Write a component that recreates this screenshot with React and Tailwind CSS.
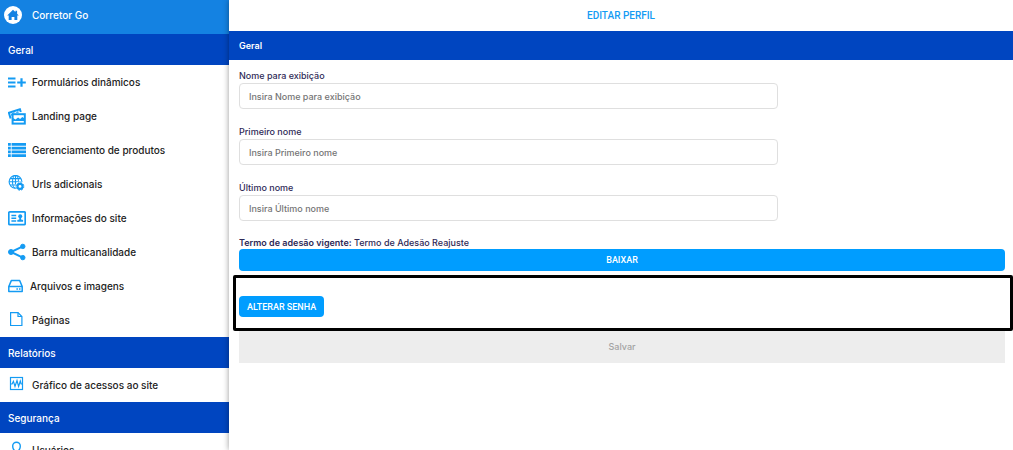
import React from 'react';

const HomeIcon = () => (
  <svg viewBox="0 0 18 18" className="w-[18px] h-[18px]">
    <circle cx="9" cy="9" r="9" fill="#fff" />
    <path d="M3.2 9.4 9 3.8l2.4 2.3V4.700h1.700v3.100l1.700 1.600h-1.500v4.600h-2.900v-3H7.600v3H4.700V9.400z" fill="#1482e2" />
  </svg>
);

const FormIcon = () => (
  <svg viewBox="0 0 18 18" className="w-[18px] h-[18px]" fill="none" stroke="currentColor">
    <path d="M0 5.500h7.500M0 9.500h7.500M0 13.500h7.500" strokeWidth="2" />
    <path d="M9.200 9.500h8.600M13.500 5.200v8.600" strokeWidth="2.200" />
  </svg>
);

const PhotosIcon = () => (
  <svg viewBox="0 0 18 18" className="w-[18px] h-[18px]" fill="none" stroke="currentColor">
    <path d="M2.600 11.500.9 5.700l11-3.500.9 2.800" strokeWidth="2" />
    <path d="m3 7.600 2.600-2.300 2 .8L10 4l1 1.600-6 .9-1.200 3z" fill="currentColor" stroke="none" />
    <rect x="4.600" y="7.200" width="12.200" height="9.400" strokeWidth="2" />
    <path d="M5 14v-3l2.500 1.600 2.600-2.200 2 1.600 2.200-2 2.400 1.600V14z" fill="currentColor" stroke="none" />
  </svg>
);

const ListIcon = () => (
  <svg viewBox="0 0 18 18" className="w-[18px] h-[18px]" fill="none" stroke="currentColor" strokeWidth="2.8">
    <path d="M0 3.300h2.800M0 7.100h2.800M0 10.900h2.800M0 14.700h2.800" />
    <path d="M3.600 3.300H18M3.600 7.100H18M3.600 10.900H18M3.600 14.700H18" />
  </svg>
);

const GlobeIcon = () => (
  <svg viewBox="0 0 18 18" className="w-[18px] h-[18px]" fill="none" stroke="currentColor" strokeWidth="1.1">
    <circle cx="7.500" cy="6.800" r="6.400" />
    <ellipse cx="7.500" cy="6.800" rx="3" ry="6.400" />
    <path d="M7.500.4v12.800M1.100 6.800h12.800M2.100 3.600h10.800M2.100 10h10.800" />
    <circle cx="12" cy="11.400" r="4.800" fill="#fff" stroke="none" />
    <circle cx="12" cy="11.400" r="2.500" strokeWidth="2.100" />
    <circle cx="12" cy="11.400" r="3.800" strokeWidth="1" strokeDasharray="1.700 1.280" />
  </svg>
);

const InfoIcon = () => (
  <svg viewBox="0 0 18 18" className="w-[18px] h-[18px]" fill="none" stroke="currentColor">
    <rect x="0.8" y="2.800" width="16.400" height="12.800" rx="1" strokeWidth="1.700" />
    <path d="M3.400 6.500h4.800M3.400 9.300h4.800M3.400 12h4.800" strokeWidth="1.500" />
    <circle cx="12.200" cy="7.200" r="2" fill="currentColor" stroke="none" />
    <path d="M11.300 8h1.800v2.400l2 .7v1.700H9.300v-1.700l2-.7z" fill="currentColor" stroke="none" />
  </svg>
);

const ShareIcon = () => (
  <svg viewBox="0 0 18 18" className="w-[18px] h-[18px]" fill="currentColor" stroke="currentColor">
    <path d="M14.800 3.400 3 9l11.800 5.600" fill="none" strokeWidth="2" />
    <circle cx="3" cy="9" r="2.500" />
    <circle cx="14.800" cy="3.400" r="2.200" />
    <circle cx="14.800" cy="14.600" r="2.200" />
  </svg>
);

const DriveIcon = () => (
  <svg viewBox="0 0 16 18" className="w-4 h-[18px]" fill="none" stroke="currentColor" strokeWidth="1.5">
    <path d="M.8 9.500 3.300 3.600h8.400l2.500 5.900v5.100H.8z" strokeLinejoin="round" />
    <path d="M.8 9.500h13.400" />
    <path d="M8.400 12.100h1.500M11 12.100h1.500" />
  </svg>
);

const PageIcon = () => (
  <svg viewBox="0 0 18 18" className="w-[18px] h-[18px]" fill="none" stroke="currentColor" strokeWidth="1.2">
    <path d="M2.600 1.600h7.400l3.900 3.900v9H2.600z" />
    <path d="M10 1.600v3.900h3.900" />
  </svg>
);

const ChartIcon = () => (
  <svg viewBox="0 0 18 18" className="w-[18px] h-[18px]" fill="none" stroke="currentColor" strokeWidth="1.2">
    <rect x="2.500" y="1.500" width="12" height="12" />
    <path d="M2.500 8h1.600l1.300-2.600 1.600 5 2-5.800 1.600 5.800L12.300 5l.9 3h1.300" />
  </svg>
);

const UserIcon = () => (
  <svg viewBox="0 0 18 18" className="w-[18px] h-[18px]" fill="none" stroke="currentColor" strokeWidth="1.4">
    <path d="M4.700 5a3.800 3.800 0 0 1 7.600 0c0 2.200-.4 3.300-1.400 4.100v1.300c2.600.5 4.400 1.600 4.400 4.600H1.700c0-3 1.800-4.100 4.400-4.600V9.100C5.100 8.300 4.700 7.200 4.700 5z" />
  </svg>
);

const sections = [
  {
    title: 'Geral',
    items: [
      { label: 'Formulários dinâmicos', Icon: FormIcon },
      { label: 'Landing page', Icon: PhotosIcon },
      { label: 'Gerenciamento de produtos', Icon: ListIcon },
      { label: 'Urls adicionais', Icon: GlobeIcon },
      { label: 'Informações do site', Icon: InfoIcon },
      { label: 'Barra multicanalidade', Icon: ShareIcon },
      { label: 'Arquivos e imagens', Icon: DriveIcon },
      { label: 'Páginas', Icon: PageIcon },
    ],
  },
  {
    title: 'Relatórios',
    items: [{ label: 'Gráfico de acessos ao site', Icon: ChartIcon }],
  },
  {
    title: 'Segurança',
    items: [{ label: 'Usuários', Icon: UserIcon }],
  },
];

const fields = [
  { id: 'display-name', label: 'Nome para exibição' },
  { id: 'first-name', label: 'Primeiro nome' },
  { id: 'last-name', label: 'Último nome' },
];

function Sidebar() {
  return (
    <aside className="w-[229px] shrink-0 bg-white text-[#222] text-[10px] font-medium">
      <a href="#" className="flex items-center gap-[10px] h-[34px] pl-1 pb-1 bg-[#1482e2] text-white">
        <HomeIcon />
        Corretor Go
      </a>
      {sections.map(({ title, items }) => (
        <nav key={title} aria-label={title}>
          <h2 className="flex items-center h-[31px] px-2 bg-[#0045c0] text-white">{title}</h2>
          {items.map(({ label, Icon }) => (
            <a key={label} href="#" className="flex items-center gap-[6px] h-[34px] px-2">
              <span className="text-[#149bf3]">
                <Icon />
              </span>
              {label}
            </a>
          ))}
        </nav>
      ))}
    </aside>
  );
}

export default function App() {
  return (
    <div className="flex h-screen overflow-hidden bg-white leading-[14px] font-['Inter',sans-serif]">
      <Sidebar />
      <main className="relative flex-1 min-w-0 bg-white text-[9px] font-medium shadow-[0_0_6px_rgba(0,0,0,0.4)]">
        <h1 className="flex items-center justify-center h-[31px] pt-px text-[#149bf3] text-[10px] font-['Roboto',sans-serif]">
          EDITAR PERFIL
        </h1>
        <h2 className="flex items-center h-[29px] px-[10px] bg-[#0045c0] text-white font-semibold">Geral</h2>

        <form className="pt-[9px] text-[#2f2a57]" onSubmit={(e) => e.preventDefault()}>
          <div className="pl-[10px] pr-2">
            {fields.map(({ id, label }) => (
              <div key={id} className="mb-4">
                <label htmlFor={id} className="block">
                  {label}
                </label>
                <input
                  id={id}
                  type="text"
                  placeholder={`Insira ${label}`}
                  className="block w-[539px] max-w-full h-[26px] px-[9px] border border-[#dfdfdf] rounded-[4px] placeholder:text-[#757575]"
                />
              </div>
            ))}
            <p className="leading-3">
              <strong className="font-semibold">Termo de adesão vigente:</strong> Termo de Adesão Reajuste
            </p>
            <button
              type="button"
              className="block w-full h-[22px] rounded-[4px] bg-[#009dff] text-white font-['Roboto',sans-serif]"
            >
              BAIXAR
            </button>
          </div>

          {/* Password section */}
          <div className="mt-1 ml-1 pt-[18px] pb-[11px] px-[3px] border-[3px] border-black rounded-[2px]">
            <button
              type="button"
              className="block h-[21px] px-2 rounded-[4px] bg-[#009dff] text-white font-['Roboto',sans-serif]"
            >
              ALTERAR SENHA
            </button>
          </div>

          <div className="pl-[10px] pr-2">
            <button type="submit" disabled className="block w-full h-8 bg-[#ededed] text-[#a3a3a3]">
              Salvar
            </button>
          </div>
        </form>
      </main>
    </div>
  );
}
